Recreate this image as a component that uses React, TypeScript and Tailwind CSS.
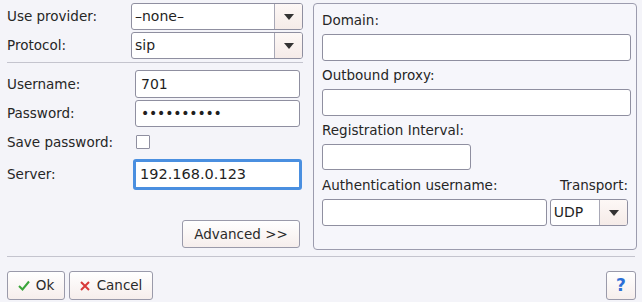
import React from 'react';

const FONT = { fontFamily: '"DejaVu Sans", Verdana, sans-serif' };

function Combo({ value, width }: { value: string; width: string }) {
  return (
    <div className={`flex h-full ${width} rounded-[3px] border border-[#8f8fa0] bg-white overflow-hidden`}>
      <div className="flex-1 flex items-center px-[3px] text-[14px] text-[#1f1f1f]">{value}</div>
      <div className="w-[28px] border-l border-[#a8a8b6] bg-gradient-to-b from-[#fdf8f6] to-[#f5ebe8] flex items-center justify-center">
        <div className="w-0 h-0 border-l-[5px] border-r-[5px] border-t-[6px] border-l-transparent border-r-transparent border-t-[#333]" />
      </div>
    </div>
  );
}

function Field({ value = '', width, height = 'h-[27px]' }: { value?: string; width: string; height?: string }) {
  return (
    <div className={`${width} ${height} rounded-[3px] border border-[#8f8fa0] bg-white flex items-center px-[5px] text-[14px] text-[#1f1f1f]`}>
      {value}
    </div>
  );
}

function Button({ children, className = '' }: { children: React.ReactNode; className?: string }) {
  return (
    <div
      className={`flex items-center justify-center rounded-[3px] border border-[#9a9aaa] bg-gradient-to-b from-[#ffffff] to-[#f6eeec] text-[13.5px] text-[#2a2a2a] ${className}`}
    >
      {children}
    </div>
  );
}

export default function App() {
  return (
    <div className="w-[642px] h-[302px] bg-[#f4f4f9] text-[#262626] text-[13.5px] overflow-hidden" style={FONT}>
      <div className="flex">
        {/* left column */}
        <div className="w-[313px] pl-[7px] pt-[3px] flex flex-col">
          <div className="flex items-center h-[27px]">
            <span className="w-[124px]">Use provider:</span>
            <Combo value="–none–" width="w-[172px]" />
          </div>
          <div className="flex items-center h-[27px] mt-[2px]">
            <span className="w-[124px]">Protocol:</span>
            <Combo value="sip" width="w-[172px]" />
          </div>
          <div className="mt-[3px] h-px w-[296px] bg-[#c4c4ce]" />
          <div className="mt-[7px] flex items-center h-[28px]">
            <span className="w-[128px]">Username:</span>
            <Field value="701" width="w-[165px]" height="h-[28px]" />
          </div>
          <div className="mt-[2px] flex items-center h-[27px]">
            <span className="w-[128px]">Password:</span>
            <div className="w-[165px] h-[27px] rounded-[3px] border border-[#8f8fa0] bg-white flex items-center px-[5px] text-[14px] tracking-[-0.2px] text-[#1f1f1f]">
              ••••••••••
            </div>
          </div>
          <div className="mt-[5px] flex items-center h-[20px]">
            <span className="w-[129px]">Save password:</span>
            <div className="w-[14px] h-[14px] border border-[#8f8fa0] bg-white rounded-[1px]" />
          </div>
          <div className="mt-[7px] flex items-center h-[31px]">
            <span className="w-[126px]">Server:</span>
            <div className="w-[169px] h-[31px] rounded-[3px] border-[3px] border-[#4a8fe0] bg-white flex items-center px-[4px] text-[14.5px] text-[#1f1f1f]">
              192.168.0.123
            </div>
          </div>
          <Button className="mt-[30px] ml-[175px] w-[118px] h-[28px]">Advanced &gt;&gt;</Button>
        </div>

        {/* right group box */}
        <div className="mt-[3px] w-[324px] h-[247px] rounded-[4px] border border-[#9c9cae] bg-[#f6f6fb] px-[8px] pt-[8px] flex flex-col">
          <span className="leading-[16px]">Domain:</span>
          <div className="mt-[6px]">
            <Field width="w-[309px]" />
          </div>
          <span className="leading-[16px] mt-[6px]">Outbound proxy:</span>
          <div className="mt-[6px]">
            <Field width="w-[309px]" />
          </div>
          <span className="leading-[16px] mt-[6px]">Registration Interval:</span>
          <div className="mt-[6px]">
            <Field width="w-[149px]" height="h-[26px]" />
          </div>
          <div className="mt-[7px] flex justify-between w-[306px] leading-[16px]">
            <span>Authentication username:</span>
            <span>Transport:</span>
          </div>
          <div className="mt-[6px] flex gap-[3px] h-[27px]">
            <Field width="w-[227px]" />
            <Combo value="UDP" width="w-[79px]" />
          </div>
        </div>
      </div>

      <div className="mt-[6px] ml-[7px] h-px w-[628px] bg-[#c4c4ce]" />

      <div className="mt-[14px] flex items-center pl-[7px] pr-[6px]">
        <Button className="w-[58px] h-[29px] gap-[6px]">
          <svg width="12" height="11" viewBox="0 0 12 11">
            <path d="M1 6 L4.5 9.5 L11 1.5" stroke="#3aa53a" strokeWidth="2" fill="none" />
          </svg>
          <span>Ok</span>
        </Button>
        <Button className="ml-[4px] w-[84px] h-[29px] gap-[7px]">
          <svg width="10" height="10" viewBox="0 0 10 10">
            <path d="M1 1 L9 9 M9 1 L1 9" stroke="#d83a3a" strokeWidth="2" fill="none" />
          </svg>
          <span>Cancel</span>
        </Button>
        <div className="flex-1" />
        <Button className="w-[30px] h-[29px]">
          <span className="text-[#2d6fd6] font-bold text-[17px]">?</span>
        </Button>
      </div>
    </div>
  );
}
